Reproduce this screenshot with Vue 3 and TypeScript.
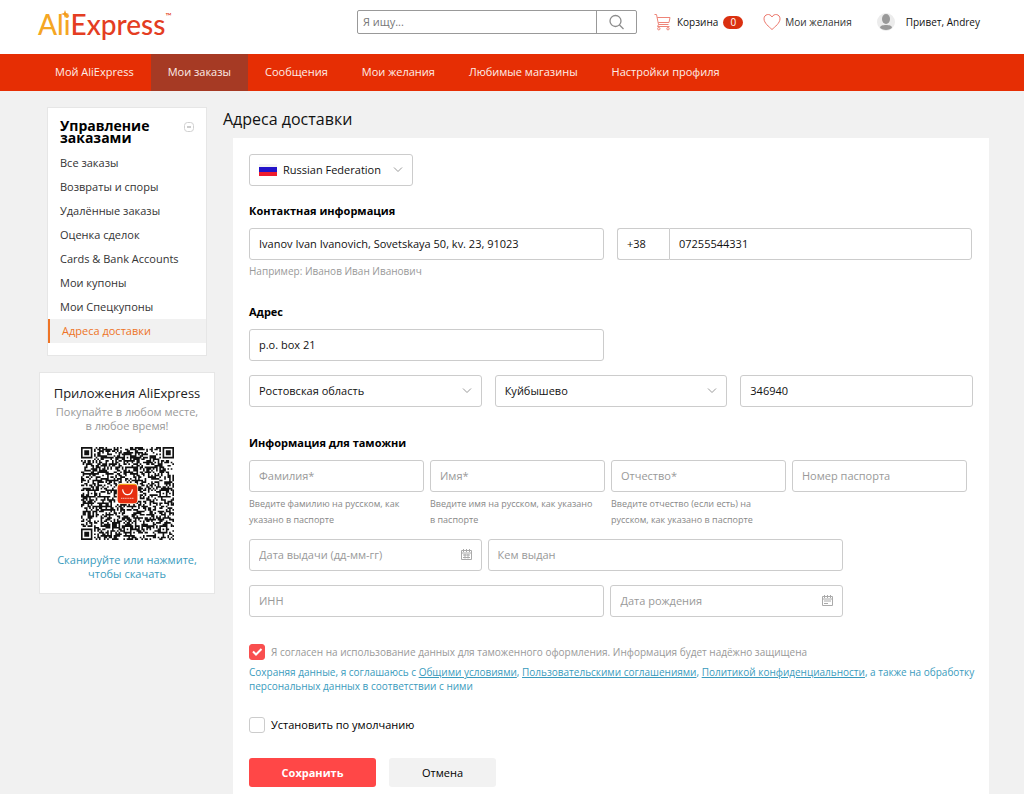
<script setup lang="ts">
import { ref } from 'vue'

const navItems: string[] = ['Мой AliExpress', 'Мои заказы', 'Сообщения', 'Мои желания', 'Любимые магазины', 'Настройки профиля']
const activeNav = ref('Мои заказы')

const menuItems: string[] = [
  'Все заказы',
  'Возвраты и споры',
  'Удалённые заказы',
  'Оценка сделок',
  'Cards & Bank Accounts',
  'Мои купоны',
  'Мои Спецкупоны',
  'Адреса доставки',
]
const activeMenu = ref('Адреса доставки')

const search = ref('')
const country = ref('Russian Federation')
const fullName = ref('Ivanov Ivan Ivanovich, Sovetskaya 50, kv. 23, 91023')
const phoneCode = ref('+38')
const phone = ref('07255544331')
const street = ref('p.o. box 21')
const region = ref('Ростовская область')
const city = ref('Куйбышево')
const zip = ref('346940')
const agree = ref(true)
const makeDefault = ref(false)

const QR_SIZE = 57
const ALIGNMENT: [number, number][] = [[28, 6], [6, 28], [28, 50], [50, 28], [50, 50]]

function buildQrPath(): string {
  const cells: boolean[][] = []
  let seed = 20177
  for (let y = 0; y < QR_SIZE; y++) {
    const row: boolean[] = []
    for (let x = 0; x < QR_SIZE; x++) {
      seed = (seed * 1103515245 + 12345) % 2147483648
      row.push((seed >> 12) % 100 < 51)
    }
    cells.push(row)
  }
  const square = (cx: number, cy: number, radius: number, isDark: (d: number) => boolean) => {
    for (let dy = -radius; dy <= radius; dy++) {
      for (let dx = -radius; dx <= radius; dx++) {
        const x = cx + dx
        const y = cy + dy
        if (x < 0 || y < 0 || x >= QR_SIZE || y >= QR_SIZE) continue
        cells[y][x] = isDark(Math.max(Math.abs(dx), Math.abs(dy)))
      }
    }
  }
  const corners: [number, number][] = [[3, 3], [QR_SIZE - 4, 3], [3, QR_SIZE - 4]]
  corners.forEach(([x, y]) => square(x, y, 4, (d) => d < 2 || d === 3))
  ALIGNMENT.forEach(([x, y]) => square(x, y, 2, (d) => d !== 1))
  let path = ''
  cells.forEach((row, y) => row.forEach((dark, x) => {
    if (dark) path += `M${x} ${y}h1v1h-1z`
  }))
  return path
}
const qrPath = buildQrPath()
</script>

<template>
  <div class="page">
    <header class="header">
      <a class="logo" href="#" aria-label="AliExpress">
        <span class="logo-ali">Ali</span><span class="logo-express">Express</span><span class="logo-tm">™</span>
        <svg class="logo-star" viewBox="0 0 8 8" aria-hidden="true"><path d="M4 0L5 3L8 4L5 5L4 8L3 5L0 4L3 3Z" fill="#f39a1d" /></svg>
      </a>
      <form class="search" role="search" @submit.prevent>
        <input v-model="search" type="text" placeholder="Я ищу..." aria-label="Поиск" />
        <button type="submit" aria-label="Найти">
          <svg width="18" height="18" viewBox="0 0 18 18" fill="none" stroke="#8c8c8c" stroke-width="1.3"><circle cx="7.500" cy="8" r="5.500" /><path d="M11.500 12L15.500 16" /></svg>
        </button>
      </form>
      <a class="head-link cart" href="#">
        <svg width="18" height="18" viewBox="0 0 18 18" fill="none" stroke="#ee8478" stroke-width="1"><path d="M0.500 1.500H2.500L4.500 11.500H14.500M3.200 4.500H16L15 9.500H4.300M4.500 11.500L3.500 13.500H15.500" /><circle cx="4.800" cy="15.700" r="1.200" /><circle cx="14" cy="15.700" r="1.200" /></svg>
        <span>Корзина</span><span class="badge">0</span>
      </a>
      <a class="head-link wishes" href="#">
        <svg width="18" height="18" viewBox="0 0 18 18" fill="none" stroke="#ec7569" stroke-width="1"><path d="M9 16.500C6 13.800 1 10 1 5.800C1 1 7 0 9 4C11 0 17 1 17 5.800C17 10 12 13.800 9 16.500Z" /></svg>
        <span>Мои желания</span>
      </a>
      <a class="head-link user" href="#">
        <svg width="18" height="18" viewBox="0 0 18 18"><circle cx="9" cy="9" r="9" fill="#ececec" /><ellipse cx="9" cy="6" rx="4" ry="5" fill="#999" /><path d="M3 14.500C3 11.200 15 11.200 15 14.500C13.500 17.800 4.500 17.800 3 14.500Z" fill="#999" /></svg>
        <span>Привет, Andrey</span>
      </a>
    </header>

    <nav class="nav">
      <a v-for="item in navItems" :key="item" href="#" :class="{ active: item === activeNav }" @click.prevent="activeNav = item">{{ item }}</a>
    </nav>

    <div class="body">
      <aside class="sidebar">
        <section class="menu">
          <div class="menu-head">
            <h2>Управление заказами</h2>
            <button type="button" aria-label="Свернуть">
              <svg width="10" height="10" viewBox="0 0 10 10" fill="none" stroke="#d0d0d0"><rect x="0.500" y="0.500" width="9" height="9" rx="3" /><path d="M3 5H7" stroke="#999" /></svg>
            </button>
          </div>
          <a v-for="item in menuItems" :key="item" href="#" :class="{ active: item === activeMenu }" @click.prevent="activeMenu = item">{{ item }}</a>
        </section>
        <section class="apps">
          <h3>Приложения AliExpress</h3>
          <p>Покупайте в любом месте,<br />в любое время!</p>
          <svg class="qr" viewBox="0 0 57 57" role="img" aria-label="QR">
            <path :d="qrPath" fill="#111" />
            <rect x="22" y="22" width="13" height="13" rx="2.500" fill="#fff" />
            <rect x="22.500" y="22.500" width="12" height="12" rx="2" fill="#f5a01c" />
            <rect x="22.500" y="23.300" width="12" height="11.200" rx="2" fill="#e62e10" />
            <path d="M25.500 26C26 30.300 31 30.300 31.500 26" fill="none" stroke="#fff" stroke-width="0.700" />
            <path d="M24.500 31.500H32.500" stroke="#f5a294" stroke-width="0.800" stroke-dasharray="0.800 0.300" />
          </svg>
          <a href="#">Сканируйте или нажмите,<br />чтобы скачать</a>
        </section>
      </aside>

      <main class="content">
        <h1>Адреса доставки</h1>
        <form class="panel" @submit.prevent>
          <div class="field country">
            <svg class="flag" width="18" height="12" viewBox="0 0 18 12" aria-hidden="true"><rect width="18" height="12" fill="#f3f3f3" /><rect y="3" width="18" height="5" fill="#2313c9" /><rect y="8" width="18" height="4" fill="#ee1c2e" /></svg>
            <select v-model="country" aria-label="Страна"><option>Russian Federation</option></select>
            <svg class="chevron" viewBox="0 0 10 6"><path d="M1 0.500L5 4.500L9 0.500" /></svg>
          </div>

          <h2>Контактная информация</h2>
          <div class="row halves">
            <input v-model="fullName" type="text" aria-label="Имя получателя" />
            <div class="phone">
              <input v-model="phoneCode" type="text" aria-label="Код страны" />
              <input v-model="phone" type="tel" aria-label="Телефон" />
            </div>
          </div>
          <p class="hint example">Например: Иванов Иван Иванович</p>

          <h2>Адрес</h2>
          <div class="row halves">
            <input v-model="street" type="text" aria-label="Адрес" />
          </div>
          <div class="row thirds">
            <div class="field">
              <select v-model="region" aria-label="Область"><option>Ростовская область</option></select>
              <svg class="chevron" viewBox="0 0 10 6"><path d="M1 0.500L5 4.500L9 0.500" /></svg>
            </div>
            <div class="field">
              <select v-model="city" aria-label="Город"><option>Куйбышево</option></select>
              <svg class="chevron" viewBox="0 0 10 6"><path d="M1 0.500L5 4.500L9 0.500" /></svg>
            </div>
            <input v-model="zip" type="text" aria-label="Индекс" />
          </div>

          <h2 class="customs">Информация для таможни</h2>
          <div class="row quarters">
            <div>
              <input type="text" placeholder="Фамилия*" aria-label="Фамилия" />
              <p class="hint">Введите фамилию на русском, как указано в паспорте</p>
            </div>
            <div>
              <input type="text" placeholder="Имя*" aria-label="Имя" />
              <p class="hint">Введите имя на русском, как указано<br />в паспорте</p>
            </div>
            <div>
              <input type="text" placeholder="Отчество*" aria-label="Отчество" />
              <p class="hint">Введите отчество (если есть) на русском, как указано в паспорте</p>
            </div>
            <div>
              <input type="text" placeholder="Номер паспорта" aria-label="Номер паспорта" />
            </div>
          </div>
          <div class="row passport">
            <div class="field">
              <input type="text" placeholder="Дата выдачи (дд-мм-гг)" aria-label="Дата выдачи" />
              <svg class="calendar" viewBox="0 0 11 11"><path d="M0.500 1.500H10.500V10.500H0.500ZM0.500 4H10.500M2.500 0V3M5.500 0V3M8.500 0V3M2 6H9M2 8.500H9M4 5V9.500M7 5V9.500" /></svg>
            </div>
            <input type="text" placeholder="Кем выдан" aria-label="Кем выдан" />
          </div>
          <div class="row tax">
            <input type="text" placeholder="ИНН" aria-label="ИНН" />
            <div class="field">
              <input type="text" placeholder="Дата рождения" aria-label="Дата рождения" />
              <svg class="calendar" viewBox="0 0 11 11"><path d="M0.500 1.500H10.500V10.500H0.500ZM0.500 4H10.500M2.500 0V3M5.500 0V3M8.500 0V3M2 6H9M2 8.500H6" /></svg>
            </div>
          </div>

          <label class="check agree">
            <span class="tick"><input v-model="agree" type="checkbox" /><svg v-if="agree" viewBox="0 0 16 16"><path d="M4 7.500L7 10.500L12.500 5" /></svg></span>
            <span>Я согласен на использование данных для таможенного оформления. Информация будет надёжно защищена</span>
          </label>
          <p class="terms">Сохраняя данные, я соглашаюсь с <a href="#">Общими условиями</a>, <a href="#">Пользовательскими соглашениями</a>, <a href="#">Политикой конфиденциальности</a>, а также на обработку персональных данных в соответствии с ними</p>
          <label class="check default">
            <span class="tick"><input v-model="makeDefault" type="checkbox" /><svg v-if="makeDefault" viewBox="0 0 16 16"><path d="M4 7.500L7 10.500L12.500 5" /></svg></span>
            <span>Установить по умолчанию</span>
          </label>
          <div class="actions">
            <button class="save" type="submit">Сохранить</button>
            <button class="cancel" type="button">Отмена</button>
          </div>
        </form>
      </main>
    </div>
  </div>
</template>

<style>
body {
  margin: 0;
  background: #f1f1f1;
}
</style>

<style scoped>
.page {
  font-family: "Open Sans", "Noto Sans", sans-serif;
  font-size: 11px;
  line-height: 16px;
  color: #111;
  height: 100vh;
  overflow: hidden;
  display: flex;
  flex-direction: column;
}
.page * {
  box-sizing: border-box;
}
a {
  color: inherit;
  text-decoration: none;
}
h1, h2, h3, p {
  margin: 0;
}
input, select, button {
  font: inherit;
  color: inherit;
}

.header {
  flex: none;
  height: 54px;
  background: #fff;
  display: flex;
  align-items: flex-start;
  padding: 10px 44px 0 38px;
}
.logo {
  position: relative;
  display: flex;
  font-family: Lato, sans-serif;
  font-size: 28px;
  font-weight: 500;
  line-height: 28px;
  flex: 0 0 319px;
}
.logo-ali {
  color: #f5a623;
}
.logo-express {
  color: #e43d22;
}
.logo-tm {
  font-size: 8px;
  line-height: 12px;
  color: #e43d22;
}
.logo-star {
  position: absolute;
  left: 23px;
  top: 0;
  width: 8px;
  height: 8px;
}
.search {
  flex: 0 0 280px;
  height: 24px;
  display: flex;
  border: 1px solid #999;
  border-radius: 2px;
  margin-right: 17px;
}
.search input {
  flex: 1;
  min-width: 0;
  border: 0;
  background: none;
  padding: 0 5px;
  outline: none;
}
.search input::placeholder {
  color: #777;
  opacity: 1;
}
.search button {
  width: 40px;
  border: 0;
  border-left: 1px solid #999;
  background: none;
  padding: 0;
  display: grid;
  place-items: center;
}
.head-link {
  display: flex;
  align-items: center;
  height: 24px;
  white-space: nowrap;
  font-size: 10px;
  color: #111;
}
.head-link svg {
  flex: none;
}
.cart {
  gap: 5px;
}
.badge {
  background: #da3010;
  color: #fff;
  border-radius: 7px;
  width: 20px;
  height: 13px;
  line-height: 13px;
  text-align: center;
}
.wishes {
  gap: 4px;
  margin-left: 20px;
  color: #333;
}
.user {
  gap: 11px;
  margin-left: auto;
}

.nav {
  flex: none;
  display: flex;
  background: #e62e04;
  padding-left: 38px;
}
.nav a {
  color: #fdeee9;
  padding: 0 17px 1px;
  line-height: 36px;
}
.nav a.active {
  background: #a63a24;
}

.body {
  flex: 1;
  min-height: 0;
  display: flex;
  align-items: stretch;
  padding: 16px 35px 0 39px;
  gap: 8px;
}
.sidebar {
  flex: 0 0 176px;
}
.menu {
  margin: 0 8px 16px;
  background: #fff;
  border: 1px solid #e6e6e6;
  padding: 12px 0;
  display: flex;
  flex-direction: column;
}
.menu-head {
  display: flex;
  justify-content: space-between;
  padding: 0 12px;
  margin-bottom: 7px;
}
.menu-head h2 {
  font-size: 14px;
  line-height: 12px;
  color: #000;
  width: 100px;
}
.menu-head button {
  border: 0;
  background: none;
  padding: 0;
  height: 14px;
  display: flex;
  align-items: center;
}
.menu a {
  line-height: 24px;
  padding-left: 12px;
  color: #333;
}
.menu a.active {
  color: #ee7426;
  background: #f1f1f1;
  border-left: 2px solid #ee7426;
}
.apps {
  background: #fff;
  border: 1px solid #e6e6e6;
  padding: 12px 0;
  text-align: center;
}
.apps h3 {
  font-size: 13px;
  line-height: 16px;
  font-weight: 400;
  color: #222;
  margin-bottom: 4px;
}
.apps p {
  line-height: 14px;
  color: #999;
}
.apps a {
  display: block;
  line-height: 14px;
  color: #3a9bbd;
}
.qr {
  display: block;
  width: 93px;
  height: 93px;
  margin: 14px auto 13px;
}

.content {
  flex: 1;
  min-width: 0;
  display: flex;
  flex-direction: column;
}
h1 {
  font-size: 16px;
  line-height: 24px;
  font-weight: 400;
  margin-bottom: 7px;
}
.panel {
  flex: 1;
  margin-left: 10px;
  background: #fff;
  padding: 16px 16px 0;
}
.panel h2 {
  font-size: 11px;
  line-height: 16px;
  font-weight: 700;
  color: #000;
  margin: 17px 0 9px;
}
.panel h2.customs {
  margin-top: 28px;
}
.panel input:not([type="checkbox"]), .panel select {
  display: block;
  width: 100%;
  height: 32px;
  border: 1px solid #ccc;
  border-radius: 3px;
  background: #fff;
  padding: 0 9px;
  margin: 0;
  appearance: none;
  outline: none;
}
.panel input:not([type="checkbox"]) {
  padding-bottom: 2px;
}
.panel input::placeholder {
  color: #999;
  opacity: 1;
}
.field {
  position: relative;
}
.panel .country {
  width: 164px;
}
.panel .country select {
  padding-left: 33px;
}
.flag {
  position: absolute;
  left: 10px;
  top: 10px;
}
.chevron {
  position: absolute;
  right: 10px;
  top: 13px;
  width: 10px;
  height: 6px;
  fill: none;
  stroke: #999;
}
.calendar {
  position: absolute;
  right: 10px;
  top: 10px;
  width: 11px;
  height: 11px;
  fill: none;
  stroke: #aaa;
}
.row {
  display: grid;
}
.halves {
  grid-template-columns: 1fr 1fr;
  gap: 13px;
  padding-right: 1px;
}
.phone {
  display: flex;
}
.panel .phone input:first-child {
  width: 52px;
  border-right: 0;
  border-radius: 3px 0 0 3px;
}
.panel .phone input:last-child {
  flex: 1;
  border-radius: 0 3px 3px 0;
}
.thirds {
  grid-template-columns: repeat(3, 1fr);
  gap: 13px;
  margin-top: 14px;
}
.quarters {
  grid-template-columns: repeat(4, 1fr);
  gap: 6px;
  padding-right: 6px;
}
.passport {
  grid-template-columns: 233fr 356fr;
  gap: 6px;
  padding-right: 130px;
  margin-top: 11px;
}
.tax {
  grid-template-columns: 356fr 233fr;
  gap: 6px;
  padding-right: 130px;
  margin-top: 14px;
}
.hint {
  font-size: 9px;
  line-height: 16px;
  color: #888;
  margin-top: 4px;
}
.example {
  font-size: 10px;
  color: #999;
  margin-top: 3px;
  margin-bottom: 25px;
}
.check {
  display: flex;
  align-items: center;
  gap: 6px;
}
.tick {
  position: relative;
  flex: none;
  width: 16px;
  height: 16px;
}
.tick input {
  display: block;
  appearance: none;
  width: 16px;
  height: 16px;
  margin: 0;
  border: 1px solid #ccc;
  border-radius: 3px;
  background: #fff;
}
.tick input:checked {
  background: #f94f4f;
  border-color: #f94f4f;
}
.tick svg {
  position: absolute;
  inset: 0;
  fill: none;
  stroke: #fff;
  stroke-width: 2;
  pointer-events: none;
}
.agree {
  margin-top: 27px;
  font-size: 10px;
  color: #999;
}
.terms {
  font-size: 10px;
  line-height: 14px;
  color: #3a9bbd;
  margin: 5px -8px 24px 0;
}
.terms a {
  text-decoration: underline;
}
.default {
  color: #000;
}
.actions {
  display: flex;
  gap: 13px;
  margin-top: 25px;
}
.actions button {
  height: 29px;
  border: 0;
  border-radius: 3px;
}
.save {
  width: 127px;
  background: #ff4747;
  color: #fff;
  font-weight: 700;
}
.cancel {
  width: 107px;
  background: #f2f2f2;
  color: #000;
}
</style>
